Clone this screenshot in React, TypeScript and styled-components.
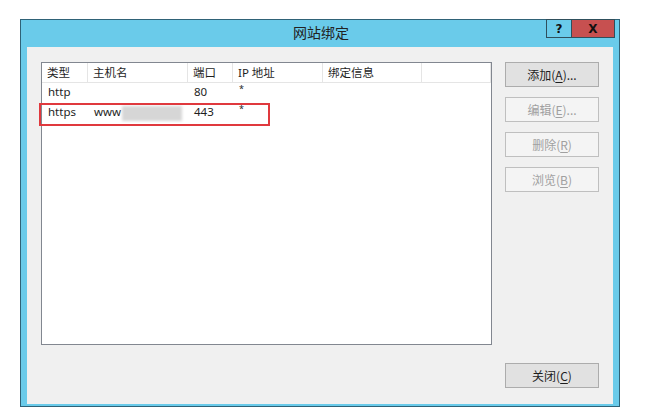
import React from 'react';
import styled, { createGlobalStyle } from 'styled-components';

const GlobalStyle = createGlobalStyle`
    html, body {
        margin: 0;
        padding: 0;
        background: #ffffff;
    }
    body {
        font-family: "Noto Sans", "Noto Sans CJK SC", sans-serif;
        font-size: 12px;
        color: #1e1e1e;
    }
`;

const Page = styled('div')`
    width: 670px;
    height: 417px;
    padding: 19px 0 0 20px;
    box-sizing: border-box;
`;

const Window = styled('div')`
    width: 600px;
    height: 388px;
    box-sizing: border-box;
    display: flex;
    flex-direction: column;
    background: #6acbea;
    border: 1px solid #2f6277;
    padding: 0 6px 2px 6px;
`;

const TitleBar = styled('div')`
    height: 27px;
    display: grid;
    grid-template-columns: 1fr auto 1fr;
    align-items: start;
    margin-right: -2px;
`;

const Title = styled('div')`
    grid-column: 2;
    font-family: "Noto Sans CJK SC", sans-serif;
    font-size: 14px;
    line-height: 24px;
    color: #222;
`;

const Controls = styled('div')`
    grid-column: 3;
    justify-self: end;
    display: flex;
    margin-top: -1px;
`;

const CaptionButton = styled('div')<{ close?: boolean }>`
    width: ${(p) => (p.close ? 43 : 26)}px;
    height: 19px;
    box-sizing: border-box;
    border: 1px solid #2f4f5c;
    border-left-width: ${(p) => (p.close ? 0 : 1)}px;
    background: ${(p) => (p.close ? '#c75050' : '#6acbea')};
    display: flex;
    align-items: center;
    justify-content: center;
    font-family: "DejaVu Sans", sans-serif;
    font-weight: bold;
    font-size: 12px;
    color: #111;
`;

const Panel = styled('div')`
    flex: 1;
    background: #f0f0f0;
    padding: 15px 14px 16px 14px;
    display: flex;
    flex-direction: column;
`;

const Main = styled('div')`
    display: flex;
    gap: 13px;
    height: 283px;
`;

const ListBox = styled('div')`
    position: relative;
    width: 451px;
    box-sizing: border-box;
    border: 1px solid #828790;
    background: #ffffff;
`;

const Row = styled('div')<{ header?: boolean }>`
    display: grid;
    grid-template-columns: 46px 100px 45px 90px 99px 1fr;
    height: ${(p) => (p.header ? 19 : 20)}px;
    border-bottom: ${(p) => (p.header ? '1px solid #e5e5e5' : 'none')};
    align-items: center;
`;

const Cell = styled('div')<{ header?: boolean }>`
    height: 100%;
    box-sizing: border-box;
    display: flex;
    align-items: center;
    padding-left: ${(p) => (p.header ? 5 : 6)}px;
    padding-bottom: ${(p) => (p.header ? 1 : 3)}px;
    border-right: ${(p) => (p.header ? '1px solid #e5e5e5' : 'none')};
    white-space: nowrap;
    overflow: hidden;
    font-family: "Noto Sans", "Noto Sans CJK SC", sans-serif;
    font-size: 11.5px;
    color: #1e1e1e;
`;

const Star = styled('span')`
    position: relative;
    top: -3px;
    font-size: 9px;
`;

const Blur = styled('span')`
    display: inline-block;
    width: 60px;
    height: 15px;
    margin-left: 1px;
    margin-top: 3px;
    background: #d6d6d6;
    filter: blur(1.5px);
`;

const Highlight = styled('div')`
    position: absolute;
    left: -3px;
    top: 40px;
    width: 227px;
    height: 19px;
    border: 2px solid #e0393e;
    pointer-events: none;
`;

const Buttons = styled('div')`
    display: flex;
    flex-direction: column;
    gap: 10px;
`;

const Button = styled('button')<{ disabled?: boolean }>`
    width: 94px;
    height: 25px;
    box-sizing: border-box;
    border: 1px solid ${(p) => (p.disabled ? '#bfbfbf' : '#acacac')};
    background: ${(p) => (p.disabled ? '#f4f4f4' : '#e1e1e1')};
    color: ${(p) => (p.disabled ? '#a0a0a0' : '#1e1e1e')};
    font-family: "Noto Sans CJK SC", sans-serif;
    font-size: 12px;
    padding: 0;
    cursor: default;

    u {
        text-decoration: underline;
        text-underline-offset: 2px;
    }
`;

const Footer = styled('div')`
    display: flex;
    justify-content: flex-end;
    margin-top: 18px;
`;

const columns = ['类型', '主机名', '端口', 'IP 地址', '绑定信息', ''];

export default function App() {
    return (
        <Page>
            <GlobalStyle />
            <Window>
                <TitleBar>
                    <Title>网站绑定</Title>
                    <Controls>
                        <CaptionButton>?</CaptionButton>
                        <CaptionButton close>X</CaptionButton>
                    </Controls>
                </TitleBar>
                <Panel>
                    <Main>
                        <ListBox>
                            <Row header>
                                {columns.map((c, i) => (
                                    <Cell header key={i}>
                                        {c}
                                    </Cell>
                                ))}
                            </Row>
                            <Row>
                                <Cell>http</Cell>
                                <Cell />
                                <Cell>80</Cell>
                                <Cell>
                                    <Star>*</Star>
                                </Cell>
                                <Cell />
                                <Cell />
                            </Row>
                            <Row>
                                <Cell>https</Cell>
                                <Cell>
                                    www
                                    <Blur />
                                </Cell>
                                <Cell>443</Cell>
                                <Cell>
                                    <Star>*</Star>
                                </Cell>
                                <Cell />
                                <Cell />
                            </Row>
                            <Highlight />
                        </ListBox>
                        <Buttons>
                            <Button>
                                添加(<u>A</u>)...
                            </Button>
                            <Button disabled>
                                编辑(<u>E</u>)...
                            </Button>
                            <Button disabled>
                                删除(<u>R</u>)
                            </Button>
                            <Button disabled>
                                浏览(<u>B</u>)
                            </Button>
                        </Buttons>
                    </Main>
                    <Footer>
                        <Button>
                            关闭(<u>C</u>)
                        </Button>
                    </Footer>
                </Panel>
            </Window>
        </Page>
    );
}
